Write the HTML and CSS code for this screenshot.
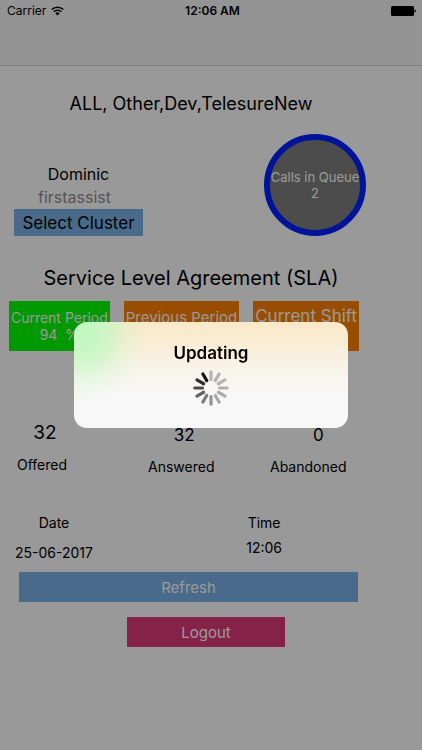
FILE: index.html
```html
<!DOCTYPE html>
<html lang="en">
<head>
<meta charset="utf-8">
<meta name="viewport" content="width=device-width, initial-scale=1">
<title>Service Level Agreement</title>
<link rel="stylesheet" href="styles.css">
</head>
<body>
<header class="navbar">
  <div class="status">
    <span class="carrier">Carrier
      <svg class="wifi" viewBox="0 0 13 10" aria-hidden="true">
        <path d="M.7 3.5a8.3 8.3 0 0 1 11.6 0M2.7 5.7a5.4 5.4 0 0 1 7.6 0" fill="none" stroke="#000" stroke-width="1.5"/>
        <path d="M4.4 7.4a3 3 0 0 1 4.2 0L6.5 9.6z"/>
      </svg>
    </span>
    <strong class="clock">12:06 AM</strong>
    <svg class="battery" viewBox="0 0 25 10" aria-hidden="true">
      <rect width="23" height="10" rx="1.5"/>
      <path d="M23.5 3.4q1.5 .4 1.5 1.6t-1.5 1.6z"/>
    </svg>
  </div>
</header>
<main class="content">
  <h1 class="clusters">ALL, Other,Dev,TelesureNew</h1>
  <section class="summary">
    <div class="agent">
      <div class="agent-name">Dominic</div>
      <div class="agent-team">firstassist</div>
      <button class="select" type="button">Select Cluster</button>
    </div>
    <div class="queue"><span>Calls in Queue</span><span>2</span></div>
  </section>
  <h2 class="sla-title">Service Level Agreement (SLA)</h2>
  <section class="tiles">
    <div class="tile good"><span>Current Period</span><span>94 &nbsp;%</span></div>
    <div class="tile"><span>Previous Period</span></div>
    <div class="tile large"><span>Current Shift</span></div>
  </section>
  <section class="totals">
    <div class="total first"><span class="count">32</span><span>Offered</span></div>
    <div class="total"><span class="count">32</span><span>Answered</span></div>
    <div class="total last"><span class="count">0</span><span>Abandoned</span></div>
  </section>
  <section class="stamps">
    <div class="stamp date"><span>Date</span><span>25-06-2017</span></div>
    <div class="stamp time"><span>Time</span><span>12:06</span></div>
  </section>
  <button class="action refresh" type="button">Refresh</button>
  <button class="action logout" type="button">Logout</button>
</main>
<div class="overlay">
  <div class="dialog" role="alertdialog" aria-labelledby="dialog-title">
    <h3 class="dialog-title" id="dialog-title">Updating</h3>
    <svg class="spinner" viewBox="-18 -18 36 36" aria-hidden="true">
      <defs><path id="spoke" d="M0-8.5V-16.2" stroke-width="3.2" stroke-linecap="round"/></defs>
      <use href="#spoke" stroke="#b4b4b3"/>
      <use href="#spoke" stroke="#b4b4b3" transform="rotate(30)"/>
      <use href="#spoke" stroke="#b4b4b3" transform="rotate(60)"/>
      <use href="#spoke" stroke="#b0b0b0" transform="rotate(90)"/>
      <use href="#spoke" stroke="#acacac" transform="rotate(120)"/>
      <use href="#spoke" stroke="#a8a8a8" transform="rotate(150)"/>
      <use href="#spoke" stroke="#949494" transform="rotate(180)"/>
      <use href="#spoke" stroke="#7d7d7d" transform="rotate(210)"/>
      <use href="#spoke" stroke="#646464" transform="rotate(240)"/>
      <use href="#spoke" stroke="#4b4b4b" transform="rotate(270)"/>
      <use href="#spoke" stroke="#303030" transform="rotate(300)"/>
      <use href="#spoke" stroke="#151515" transform="rotate(330)"/>
    </svg>
  </div>
</div>
</body>
</html>
```
FILE: styles.css
```css
* { box-sizing: border-box; }

body {
  margin: 0;
  min-height: 100vh;
  background: #fff;
  color: #000;
  font-family: Inter, "Liberation Sans", sans-serif;
  font-size: 14px;
  line-height: 16px;
}

h1, h2, h3 { margin: 0; font-weight: 400; }

button {
  border: 0;
  padding: 0;
  font-family: inherit;
  cursor: pointer;
}

.navbar {
  height: 66px;
  background: #f7f7f7;
  border-bottom: 1px solid #d6d6d6;
}

.status {
  display: grid;
  grid-template-columns: 1fr auto 1fr;
  align-items: center;
  height: 22px;
  padding: 0 6px 0 7px;
  font-size: 12px;
}

.carrier { display: flex; align-items: center; gap: 5px; }
.clock { padding-left: 2px; font-weight: 600; }
.wifi { width: 13px; height: 10px; }
.battery { width: 25px; height: 10px; justify-self: end; }

.content {
  display: flex;
  flex-direction: column;
  padding: 24px 56px 24px 8px;
}

.clusters {
  padding-left: 8px;
  font-size: 18px;
  line-height: 28px;
  text-align: center;
}

.summary {
  display: flex;
  justify-content: space-between;
  align-items: flex-end;
  margin-top: 16px;
  padding-left: 6px;
}

.agent {
  display: flex;
  flex-direction: column;
  align-items: center;
  width: 129px;
  font-size: 16px;
  line-height: 23px;
}

.agent-team { padding-right: 8px; color: #8e8e8e; }

.select {
  width: 100%;
  height: 27px;
  background: #7ab1e6;
  color: #000;
  font-size: 17px;
}

.queue {
  display: flex;
  flex-direction: column;
  align-items: center;
  justify-content: center;
  width: 102px;
  height: 102px;
  border: 6px solid #0021ff;
  border-radius: 50%;
  background: #7f7f7f;
  color: #fff;
  font-size: 13px;
  white-space: nowrap;
}

.sla-title {
  margin-top: 28px;
  padding-left: 8px;
  font-size: 20px;
  line-height: 28px;
  text-align: center;
}

.tiles {
  display: grid;
  grid-template-columns: 101fr 116fr 106fr;
  gap: 14px;
  margin-top: 9px;
  padding: 0 7px 0 1px;
}

.tile {
  display: flex;
  flex-direction: column;
  align-items: center;
  height: 50px;
  padding-top: 8px;
  background: #ff8000;
  color: #fff;
  font-size: 15px;
  line-height: 17px;
  white-space: nowrap;
}

.good { background: #0f0; font-size: 14px; }
.large { padding-top: 7px; font-size: 17px; }

.totals {
  display: grid;
  grid-template-columns: 131fr 122fr 96fr;
  justify-items: start;
  margin-top: 72px;
  padding-left: 9px;
}

.total {
  display: flex;
  flex-direction: column;
  align-items: center;
  gap: 12px;
  padding-top: 2px;
  line-height: 20px;
}

.first { padding-top: 0; }
.count { padding-left: 6px; font-size: 17px; }
.first .count { font-size: 19px; }
.last .count { padding-left: 20px; }

.stamps {
  display: flex;
  justify-content: space-between;
  margin-top: 37px;
  padding: 0 84px 0 7px;
  line-height: 18px;
}

.stamp {
  display: flex;
  flex-direction: column;
  align-items: center;
}

.date { gap: 12px; }
.time { gap: 7px; }

.action {
  height: 30px;
  color: #fff;
  font-size: 15px;
}

.refresh { margin: 10px 8px 0 11px; background: #7ab1e6; }
.logout { width: 158px; margin: 15px 0 0 119px; background: #df3a78; }

.overlay {
  position: fixed;
  inset: 0;
  display: flex;
  align-items: center;
  justify-content: center;
  background: rgba(0, 0, 0, .4);
}

.dialog {
  display: flex;
  flex-direction: column;
  align-items: center;
  gap: 6px;
  width: 65%;
  height: 106px;
  padding-top: 20px;
  border-radius: 13px;
  background:
    radial-gradient(ellipse 60px 70px at 4% 10%, #bff8c0 0%, rgba(191, 248, 192, .75) 35%, rgba(200, 248, 200, .3) 68%, rgba(210, 248, 210, 0) 100%),
    linear-gradient(#f9e8c8, #f9eed8 25%, #f8f5ee 50%, #f8f8f8 70%);
}

.dialog-title {
  font-size: 17px;
  font-weight: 600;
  line-height: 22px;
}

.spinner { width: 36px; height: 36px; }
```
